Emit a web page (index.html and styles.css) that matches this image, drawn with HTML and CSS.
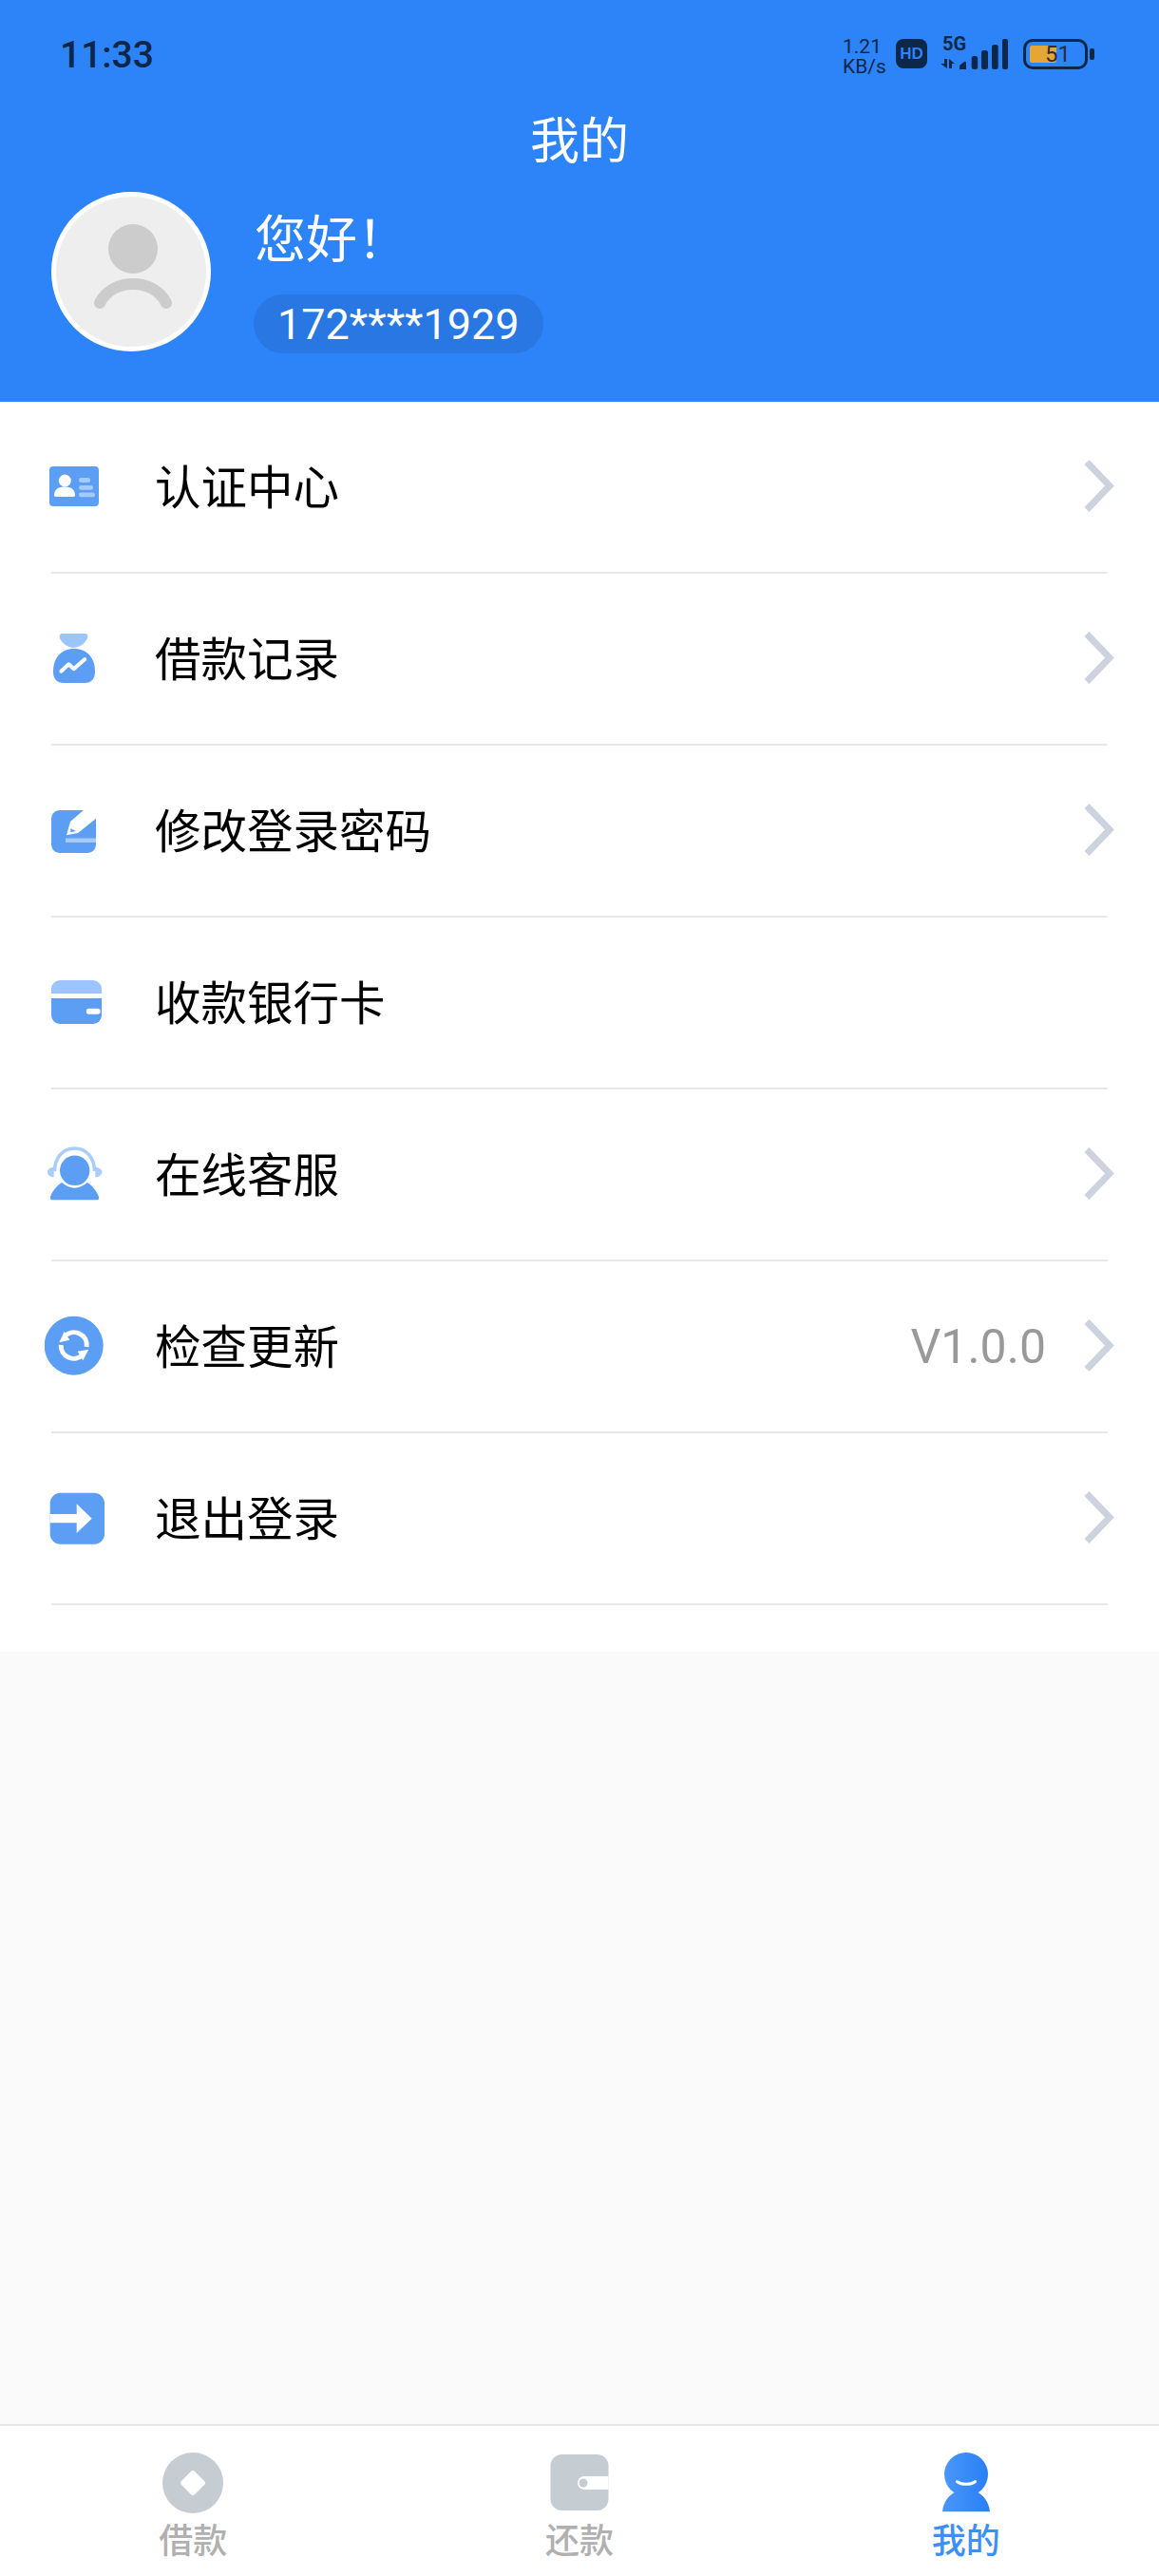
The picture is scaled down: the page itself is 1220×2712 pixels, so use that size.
FILE: index.html
```html
<!DOCTYPE html>
<html lang="zh-CN">
  <head>
    <meta charset="UTF-8" />
    <meta name="viewport" content="width=device-width, initial-scale=1.0" />
    <title>我的</title>
    <link rel="stylesheet" href="styles.css">
  </head>
  <body>
    <div class="app">
      <header class="header">
        <div class="status-bar">
          <span class="time">11:33</span>
          <div class="status-icons">
            <span class="speed">1.21<br />KB/s</span>
            <span class="hd">HD</span>
            <svg class="signal" width="73" height="41" viewBox="0 -8 73 41">
              <text class="five-g" x="3" y="13">5G</text>
              <path d="M5 22h3v10L1 27h4z" fill="#0d2749" />
              <path d="M10 22l6 5h-3v5h-3z" fill="#0d2749" />
              <path d="M21 29l5-4c1-.6 2 0 2 1v7h-7z" fill="#0d2749" />
              <rect x="33.700" y="19" width="6.500" height="14" rx="2.500" fill="#0d2749" />
              <rect x="44" y="13" width="7" height="20" rx="2.500" fill="#0d2749" />
              <rect x="55" y="7" width="6.700" height="26" rx="2.500" fill="#0d2749" />
              <rect x="66" y="1" width="6" height="32" rx="2" fill="#0d2749" />
            </svg>
            <div class="battery">
              <div class="battery-body">
                <span class="battery-fill"></span>
                <span class="battery-num">51</span>
              </div>
              <span class="battery-cap"></span>
            </div>
          </div>
        </div>
        <h1 class="title">我的</h1>
        <div class="profile">
          <div class="avatar">
            <svg width="158" height="158" viewBox="5 5 158 158">
              <circle cx="86" cy="60" r="26" fill="#cccccc" />
              <path d="M51 117C58 103 72 97 86 97C100 97 114 103 121 117" fill="none" stroke="#cccccc" stroke-width="12" stroke-linecap="round" />
            </svg>
          </div>
          <div class="profile-text">
            <div class="hello">您好！</div>
            <div class="phone">172****1929</div>
          </div>
        </div>
      </header>

      <ul class="menu">
        <li class="menu-row">
          <svg class="menu-icon" width="64" height="65" viewBox="0 0 64 65">
            <rect x="5" y="11" width="52" height="42" rx="4" fill="#5b9ef4" />
            <circle cx="21.300" cy="26" r="6.500" fill="#fff" />
            <path d="M10 41c0-6 5-8.500 11-8.500s11 2.500 11 8.500c0 1.300-.7 2-2 2H12c-1.300 0-2-.7-2-2z" fill="#fff" />
            <rect x="36" y="23" width="12" height="5" rx="2.500" fill="#a6cbfb" />
            <rect x="36" y="31" width="15" height="4.700" rx="2.300" fill="#a6cbfb" />
            <rect x="36" y="38.500" width="17" height="4.700" rx="2.300" fill="#a6cbfb" />
          </svg>
          <span class="menu-label">认证中心</span>
          <svg class="chevron" width="33" height="57" viewBox="0 0 33 57"><path d="M4 3.500L28 28.500L4 53.500" /></svg>
        </li>
        <li class="menu-row">
          <svg class="menu-icon" width="64" height="65" viewBox="0 0 64 65">
            <path d="M19 6h23c3 0 4 2 3 5-2 5-7 9-14.500 10-7.500-1-12.500-5-14.500-10-1-3 0-5 3-5z" fill="#9cc4fd" />
            <path d="M31 22C45 22 53 32 53 46C53 54 49 58 42 58H20C13 58 9 54 9 46C9 32 17 22 31 22z" fill="#5b9ef4" />
            <path d="M17.300 45.700L25.300 38.300L30.700 43.300L42.300 33" fill="none" stroke="#fff" stroke-width="4" stroke-linecap="round" stroke-linejoin="round" />
          </svg>
          <span class="menu-label">借款记录</span>
          <svg class="chevron" width="33" height="57" viewBox="0 0 33 57"><path d="M4 3.500L28 28.500L4 53.500" /></svg>
        </li>
        <li class="menu-row">
          <svg class="menu-icon" width="64" height="65" viewBox="0 0 64 65">
            <path d="M16 11h38v36c0 5-4 9-9 9H16c-5 0-9-4-9-9V20c0-5 4-9 9-9z" fill="#5b9ef4" />
            <path d="M23 37.300L27 23L42 10H55V19L35 35z" fill="#fff" />
            <path d="M27.300 30.300L33 33L27.300 34.300z" fill="#5b9ef4" />
            <rect x="22" y="40.500" width="32" height="4.500" fill="#a6cbfb" />
          </svg>
          <span class="menu-label">修改登录密码</span>
          <svg class="chevron" width="33" height="57" viewBox="0 0 33 57"><path d="M4 3.500L28 28.500L4 53.500" /></svg>
        </li>
        <li class="menu-row">
          <svg class="menu-icon" width="64" height="65" viewBox="0 0 64 65">
            <path d="M7 23v-5a9 9 0 0 1 9-9h35a9 9 0 0 1 9 9v5z" fill="#9cc4fd" />
            <path d="M7 28h53v18a9 9 0 0 1-9 9H16a9 9 0 0 1-9-9z" fill="#5b9ef4" />
            <rect x="43.700" y="38.700" width="15" height="6" rx="3" fill="#fff" />
          </svg>
          <span class="menu-label">收款银行卡</span>
        </li>
        <li class="menu-row">
          <svg class="menu-icon" width="64" height="65" viewBox="0 0 64 65">
            <path d="M10.500 29C10.500 15 19 5 31.500 5S52.500 15 52.500 29" fill="none" stroke="#a9cdfc" stroke-width="3.500" />
            <path d="M9.700 25c-4 0-6.700 2-6.700 5s2.700 5.300 6.700 5.300z" fill="#a9cdfc" />
            <path d="M53.300 25c4 0 7 2 7 5s-3 5.300-7 5.300z" fill="#a9cdfc" />
            <circle cx="31.700" cy="28.300" r="15.700" fill="#5b9ef4" />
            <path d="M18 41C23 45 27 46.700 31.500 46.700S40 45 45 41C50 44 55 50 57 56C57.500 58 56.500 59.300 55 59.300H8C6.500 59.300 5.500 58 6 56C8 50 13 44 18 41z" fill="#5b9ef4" />
          </svg>
          <span class="menu-label">在线客服</span>
          <svg class="chevron" width="33" height="57" viewBox="0 0 33 57"><path d="M4 3.500L28 28.500L4 53.500" /></svg>
        </li>
        <li class="menu-row">
          <svg class="menu-icon" width="64" height="65" viewBox="0 0 64 65">
            <circle cx="30.700" cy="31.700" r="31" fill="#5b9ef4" />
            <path d="M21 22A13.500 13.500 0 0 1 44.200 33" fill="none" stroke="#fff" stroke-width="5" />
            <path d="M40 41.500A13.500 13.500 0 0 1 17.200 31" fill="none" stroke="#fff" stroke-width="5" />
            <path d="M20.700 16.700L15.300 28.300L26.300 25.700z" fill="#fff" />
            <path d="M40.300 47.300L46.300 35.700L34.700 37.700z" fill="#fff" />
          </svg>
          <span class="menu-label">检查更新</span>
          <span class="menu-value">V1.0.0</span>
          <svg class="chevron" width="33" height="57" viewBox="0 0 33 57"><path d="M4 3.500L28 28.500L4 53.500" /></svg>
        </li>
        <li class="menu-row">
          <svg class="menu-icon" width="64" height="65" viewBox="0 0 64 65">
            <rect x="5.700" y="5.700" width="57.300" height="54" rx="11" fill="#5b9ef4" />
            <path d="M5.700 28H33.700V17.300L49.700 32.700L33.700 48V37.300H5.700z" fill="#fff" />
          </svg>
          <span class="menu-label">退出登录</span>
          <svg class="chevron" width="33" height="57" viewBox="0 0 33 57"><path d="M4 3.500L28 28.500L4 53.500" /></svg>
        </li>
      </ul>

      <div class="spacer"></div>

      <nav class="tabbar">
        <div class="tab">
          <svg width="64" height="64" viewBox="0 0 64 64">
            <circle cx="32" cy="32" r="32" fill="#c5ccd2" />
            <rect x="22" y="22" width="20" height="20" rx="3" transform="rotate(45 32 32)" fill="#fff" />
          </svg>
          <span>借款</span>
        </div>
        <div class="tab">
          <svg width="64" height="64" viewBox="0 0 64 64">
            <rect x="1.500" y="2" width="61" height="59" rx="12" fill="#c5ccd2" />
            <path d="M37 25h25.500v14H37a7 7 0 0 1 0-14z" fill="#fff" />
            <circle cx="36" cy="32" r="4.500" fill="#c5ccd2" />
          </svg>
          <span>还款</span>
        </div>
        <div class="tab tab-active">
          <svg width="64" height="64" viewBox="0 0 64 64">
            <defs>
              <linearGradient id="me-grad" x1="0" y1="0" x2="1" y2="0">
                <stop offset="0" stop-color="#4a97fb" />
                <stop offset="1" stop-color="#2a7ff6" />
              </linearGradient>
            </defs>
            <circle cx="32" cy="23" r="23" fill="url(#me-grad)" />
            <path d="M7 62.300C8 52 14 44 22 41C28 44 36 44 42 41C50 44 56 52 57 62.300z" fill="url(#me-grad)" />
            <path d="M22.500 30.700c5 3.500 14 3.500 19 0" fill="none" stroke="#fff" stroke-width="3" stroke-linecap="round" />
          </svg>
          <span>我的</span>
        </div>
      </nav>
    </div>
  </body>
</html>
```

FILE: styles.css
```css
* {
  box-sizing: border-box;
}
body {
  margin: 0;
  font-family: "Noto Sans CJK SC", "Noto Sans", sans-serif;
  background-color: #fafafa;
}
.app {
  width: 1220px;
  height: 2712px;
  display: flex;
  flex-direction: column;
}

/* top blue part */
.header {
  height: 423px;
  background-color: #2d83f8;
  color: #fff;
}
.status-bar {
  height: 107px;
  padding: 36px 68px 0 63px;
  display: flex;
  justify-content: space-between;
  align-items: flex-start;
}
.time {
  font-family: Roboto, sans-serif;
  font-size: 39px;
  line-height: 44px;
  font-weight: 500;
  color: #0d2749;
}
.status-icons {
  display: flex;
  align-items: center;
  height: 33px;
  margin-top: 4px;
  color: #0d2749;
}
.speed {
  font-family: Roboto, sans-serif;
  font-size: 21px;
  line-height: 21px;
  width: 56px;
  margin-top: 7px;
}
.hd {
  width: 33px;
  height: 31px;
  border-radius: 8px;
  background-color: #0d2749;
  color: #2d83f8;
  font-family: "Liberation Sans", sans-serif;
  font-size: 17px;
  font-weight: 700;
  line-height: 31px;
  text-align: center;
}
.signal {
  display: block;
  margin-left: 13px;
  margin-bottom: 8px;
  flex-shrink: 0;
}
.five-g {
  font-family: Roboto, sans-serif;
  font-size: 20px;
  font-weight: 700;
  fill: #0d2749;
}
.battery {
  display: flex;
  align-items: center;
  margin-left: 15px;
}
.battery-body {
  width: 68px;
  height: 32px;
  border: 3px solid #0d2749;
  border-radius: 10px;
  padding: 4px;
  position: relative;
}
.battery-fill {
  display: block;
  width: 28px;
  height: 18px;
  background-color: #e5a636;
  border-radius: 2px;
}
.battery-num {
  position: absolute;
  left: 20px;
  top: 1px;
  font-family: Roboto, sans-serif;
  font-size: 24px;
  line-height: 24px;
  color: #2b3038;
}
.battery-cap {
  width: 5px;
  height: 12px;
  margin-left: 2px;
  border-radius: 2px;
  background-color: #0d2749;
}
.title {
  margin: 0;
  height: 78px;
  font-size: 52px;
  line-height: 76px;
  font-weight: 400;
  text-align: center;
}
.profile {
  display: flex;
  padding: 17px 0 0 54px;
}
.avatar {
  width: 168px;
  height: 168px;
  border: 5px solid #fff;
  border-radius: 50%;
  background-color: #eeeeee;
}
.avatar svg {
  display: block;
}
.profile-text {
  margin-left: 45px;
}
.hello {
  font-size: 54px;
  line-height: 62px;
  margin-top: 16px;
  margin-left: 1px;
}
.phone {
  width: 305px;
  height: 62px;
  margin-top: 30px;
  padding-left: 25px;
  border-radius: 31px;
  background-color: #2977e3;
  font-family: Roboto, sans-serif;
  font-size: 45px;
  line-height: 64px;
}

/* menu list */
.menu {
  list-style: none;
  margin: 0;
  padding: 0 0 49px 0;
  background-color: #fff;
}
.menu-row {
  height: 181px;
  margin: 0 54px;
  display: flex;
  align-items: center;
  border-bottom: 2px solid #e8e8e8;
}
.menu-icon {
  flex-shrink: 0;
  margin-left: -7px;
}
.menu-label {
  margin-left: 52px;
  font-size: 48.500px;
  line-height: 60px;
  color: #000;
  margin-top: -5px;
}
.menu-value {
  margin-left: auto;
  margin-right: 39px;
  font-family: Roboto, sans-serif;
  font-size: 50px;
  line-height: 60px;
  color: #999;
}
.chevron {
  flex-shrink: 0;
  margin-left: auto;
  margin-right: -7px;
  margin-top: -2px;
}
.menu-value + .chevron {
  margin-left: 0;
}
.chevron path {
  fill: none;
  stroke: #cdd3de;
  stroke-width: 7;
}
.spacer {
  flex: 1;
}

/* bottom tabs */
.tabbar {
  height: 160px;
  border-top: 2px solid #e6e6e6;
  background-color: #fff;
  display: grid;
  grid-template-columns: 1fr 1fr 1fr;
}
.tab {
  display: flex;
  flex-direction: column;
  align-items: center;
  padding-top: 28px;
  font-size: 36px;
  line-height: 44px;
  font-weight: 500;
  color: #b0b0b0;
}
.tab svg {
  display: block;
}
.tab span {
  margin-top: 4px;
}
.tab-active {
  color: #3d8ff7;
}
```
